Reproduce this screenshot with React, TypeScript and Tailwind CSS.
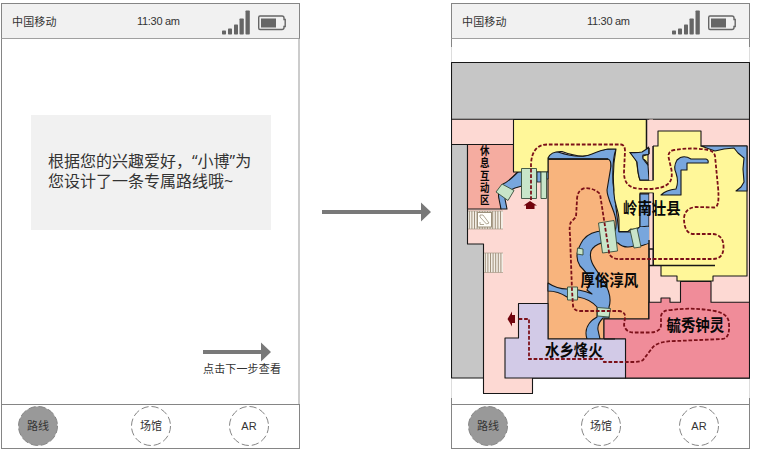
import React from "react";

const fontStack = "font-['Liberation_Sans','Noto_Sans_CJK_SC',sans-serif]";

function StatusBar() {
  return (
    <header className="flex h-[36px] shrink-0 items-center border border-[#858585] border-b-[#a0a0a0] bg-[#f1f1f1] text-[11px] leading-none text-[#333]">
      <span className="ml-[10px] mt-[2px] w-[125px] tracking-[0.15px]">中国移动</span>
      <span className="w-[84px] whitespace-nowrap tracking-[-0.3px]">11:30 am</span>
      <svg className="h-[28px] w-[66px]" viewBox="220 6 66 28">
        <g fill="#666">
          <rect x="221" y="29.5" width="4" height="4" rx=".7" />
          <rect x="227" y="27.5" width="4" height="6" rx=".7" />
          <rect x="233" y="23.5" width="4" height="10" rx=".7" />
          <rect x="238.5" y="17.5" width="4.3" height="16" rx=".7" />
          <rect x="244.5" y="9.5" width="4.3" height="24" rx=".7" />
          <rect x="260" y="17.5" width="15" height="9" />
        </g>
        <path d="M259 15H281Q283 15 283 17V18.5H284.2V25.5H283V26.5Q283 28.5 281 28.5H259Q257.7 28.5 257.7 27V16.5Q257.7 15 259 15Z" fill="none" stroke="#666" strokeWidth="1.4" />
      </svg>
    </header>
  );
}

function Tab({ label, active = false }: { label: string; active?: boolean }) {
  return (
    <button className="relative flex h-10 w-10 items-center justify-center text-[11px] leading-none text-[#333]">
      <svg className="absolute inset-0 h-10 w-10" viewBox="0 0 40 40">
        <circle cx="20" cy="20" r="19.5" fill={active ? "#999" : "#fff"} stroke="#858585" strokeDasharray="7.2 3" />
      </svg>
      <span className="relative">{label}</span>
    </button>
  );
}

function TabBar() {
  return (
    <nav className="flex h-[45px] shrink-0 items-start border border-[#858585] pl-4 pt-px">
      <Tab label="路线" active />
      <div className="ml-[73px]"><Tab label="场馆" /></div>
      <div className="ml-[58px]"><Tab label="AR" /></div>
    </nav>
  );
}

function Arrow({ length }: { length: number }) {
  return (
    <svg width={length} height="20" viewBox={`0 0 ${length} 20`} className="block shrink-0">
      <path d={`M0 8H${length - 10}V.5L${length} 10L${length - 10} 19.5V12H0Z`} fill="#797979" />
    </svg>
  );
}

const labels = [
  { text: "岭南壮县", x: 623, y: 214 },
  { text: "厚俗淳风", x: 580.5, y: 285.5 },
  { text: "毓秀钟灵", x: 666.5, y: 331 },
  { text: "水乡烽火", x: 545, y: 356 },
];

function Stairs({ x, y, w, h }: { x: number; y: number; w: number; h: number }) {
  const count = Math.floor(w / 2.6);
  return (
    <g>
      <rect x={x} y={y} width={w} height={h} fill="#f3eee6" />
      {Array.from({ length: count }, (_, i) => (
        <path key={i} d={`M${x + 1.3 + i * 2.6} ${y}v${h}`} stroke="#96866f" strokeWidth=".9" />
      ))}
      <path d={`M${x} ${y}h${w}M${x} ${y + h}h${w}`} stroke="#a79a88" strokeWidth=".7" />
    </g>
  );
}

function FloorMap() {
  return (
    <svg className="block h-[365px] w-[299px]" viewBox="451 39 299 365">
      <g stroke="#171717" strokeWidth="1.1" strokeLinejoin="round">
        <path d="M451.5 62.5H749.5V378H451.5Z" fill="#c6c6c6" />
        <path d="M451.5 119.3H749.5V378H532.5V393.5H483.5V244H467.5V144.5H451.5Z" fill="#fdd9d3" />
        <path d="M467.5 144.5H513.5V171.5H518Q504 187 501 188L501 209H467.5Z" fill="#f5aca0" />
        <path d="M518 172Q508 182 503 184Q497 191 499 199L501 209H507L505 199Q508 190 515 188L522 186V171Z" fill="#78a6dd" />
        <path d="M548 159H611V183H649V319H604V339H548Z" fill="#f8b47d" />
        <path d="M548 158V154Q551 150 558 152Q582 160 592 153Q604 148 616 149Q612 160 613 183L616 208L619 232H631L640 227V194H649V243Q641 247 634 246Q624 249 618 243C607 240 595 243 591 251C588 262 597 270 603 280C608 288 612 298 609 307V318H603Q597 324 598 330L600 339H587C584 330 588 322 597 317V307Q590 299 578 297H567Q558 291 548 291V283Q557 289 567 289Q580 289 592 294L587 290C593 281 588 274 580 266C574 257 578 248 583 240Q590 231 604 231H615C620 216 607 202 607 190L611 166Q611 160 608 159H548Z" fill="#78a6dd" />
        <path d="M513.5 119.5H646.5V149L649 147V154L630 152.5Q637 159 637 164Q638 175 640 180.3H653V146H658V131H701V146H747V276H713V281H677V276H661V265.5H653.3V193H640V227Q634 230 631 229L628 231.5H619V220C619 209 613 203 614 190Q612 170 616 149H608Q601 150 592 154Q582 159 562 151.5Q551 151 548 158V172H513.5Z" fill="#fff799" />
        <path d="M630 152.5Q637 153 642 152L649 147.5V154.5L643 155Q642 159 648 165L649 180H640Q638 175 637 162Z M640 194H649V226L640 227Z M701 146L715 151L724 149L734 148L738 153L744 158L743 169L744 182L741 187L736 191H747V146Z" fill="#78a6dd" />
        <path d="M661 195Q666 190 676 189Q679 182 676 173Q673 167 677 160Q683 154 691 159H706Q709 160 708 163H687V170H681V195Z" fill="#78a6dd" />
        <path d="M643 156L648 154.5V165Q646 160 643 159Z" fill="#fff799" />
        <path d="M649.2 119.5H653V180.3H649.2ZM649.2 193.5H653.3V249H649.2Z" fill="#fdd9d3" stroke="none" />
        <path d="M640 227H649V243Q643 245 640 244L638 230Z" fill="#78a6dd" stroke="none" />
        <path d="M646.5 119.5V149M649 148V154M653 180V146M653.3 265V193M649 240V249H653M649 249V319M649 265.5H715M548 159H608" fill="none" strokeWidth="1.4" />
        <path d="M604 319H649V302.3H661V298H670V302.3H680.5V281.5H711V302.3H749.5V378H625.5V339H604Z" fill="#f08c99" />
        <path d="M518.5 303.5H548V339H625.5V378H505V338H518.5Z" fill="#d2cae7" />
        <path d="M604 339H615" />
      </g>
      <path d="M537 172H541V182H537ZM546.5 172H548V179H546.5Z" fill="#78a6dd" stroke="#171717" strokeWidth=".8" />
      <g fill="#c8e5c9" stroke="#354d3b" strokeWidth=".9">
        <path d="M502 184L514 190.5L508 200.5L496 192Z" />
        <path d="M521.5 168.5H536.5V198.5H521.5ZM541 172H546.5V198.5H541Z" />
        <path d="M598.5 223L614 220.5L617.5 251L602.5 253Z" />
        <path d="M630 230L637 228L641 247L634 248Z" />
        <path d="M577.5 248L583 249L583 255L577 254Z" />
        <path d="M567.5 287H577.5V300H567.5ZM597.5 307.5L610.5 308.5L609 317L597.5 316Z" />
      </g>
      <Stairs x={468} y={211} w={35} h={18} />
      <Stairs x={484} y={253} w={19} h={19.5} />
      <rect x="477.5" y="212.5" width="14" height="14.5" fill="#fffefa" stroke="#9c907b" />
      <path d="M480 215L483 215L489 223L486.5 224L480 217ZM480 222V224.5H484" fill="none" stroke="#9c907b" strokeWidth=".8" />
      <path d="M531 200V164Q532 145 547 144.5H621Q625 145 625 151L624 172C624 189 635 189 650 189C669 188 673 182 671.5 170L668.5 157Q668 151 674 150Q692 147 708 150Q714 151 715 156L718 187Q720 208 714 207.5L696 207Q685 208 684 218Q684 234 694 234H713Q724 235 723.5 248Q723 259 713 259H623Q610 260 609 252L600 194Q594 188 585 188Q577 190 577 200L576 217L571 222Q569 225 570 235L572 290L573 306Q574 311 580 311H619Q626 312 625 318L624 325Q626 333 635 332.5H650Q661 332 661 325V316Q662 310 671 310Q692 307 715 311Q729 314 729 324Q730 339 722 339L676 341Q659 341 653 347L643 360Q640 362 634 362H604L603 359H529V319H518" fill="none" stroke="#7c1019" strokeWidth="1.8" strokeDasharray="3.7 1.8" />
      <path d="M530 201L537 205.5H534.5V209H526V205.5H523.5ZM507.5 319L512 311.5V315H515V323H512V326.5Z" fill="#71040d" />
      <g className="font-['Noto_Sans_CJK_SC',sans-serif] font-bold" fill="#080808">
        {labels.map((label) => (
          <text key={label.text} transform={`translate(${label.x} ${label.y}) scale(.89 1)`} fontSize="16.2">{label.text}</text>
        ))}
        <text transform="translate(484.7 145.3) scale(.86 1)" fontSize="11" letterSpacing="1.3" className="[writing-mode:vertical-rl]">
          休息互动区
        </text>
      </g>
      <path d="M451.5 47V62M749.5 47V62M451.5 379V398M749.5 379V398" stroke="#ddd" />
      <path d="M451.5 39V47M749.5 39V47M451.5 398V404M749.5 398V404" stroke="#858585" />
    </svg>
  );
}

export default function App() {
  return (
    <main className={`flex h-[458px] w-[757px] overflow-hidden bg-white pl-px pt-[3px] ${fontStack}`}>
      <section className="flex h-[446px] w-[299px] shrink-0 flex-col">
        <StatusBar />
        <div className="flex h-[365px] shrink-0 flex-col border-l border-r-2 border-l-[#858585] border-r-[#ccc] pt-[76px]">
          <div className="ml-[29px] flex h-[115px] w-[240px] shrink-0 items-center bg-[#f1f1f1] pb-[5px] pl-[17px]">
            <p className="whitespace-nowrap text-[16px] leading-5 text-[#333] font-['Open_Sans','Noto_Sans_CJK_SC',sans-serif]">
              根据您的兴趣爱好<span className="font-['Noto_Sans_CJK_SC',sans-serif]">，</span>“小博”为<br />您设计了一条专属路线哦~
            </p>
          </div>
          <div className="ml-[201px] mt-[112px]">
            <Arrow length={68} />
            <p className="whitespace-nowrap text-[11px] leading-[14px] tracking-[0.15px] text-[#333]">点击下一步查看</p>
          </div>
        </div>
        <TabBar />
      </section>
      <div className="flex h-[446px] w-[151px] shrink-0 items-start pl-[22px] pt-[199px]">
        <Arrow length={109} />
      </div>
      <section className="flex h-[446px] w-[299px] shrink-0 flex-col">
        <StatusBar />
        <FloorMap />
        <TabBar />
      </section>
    </main>
  );
}
